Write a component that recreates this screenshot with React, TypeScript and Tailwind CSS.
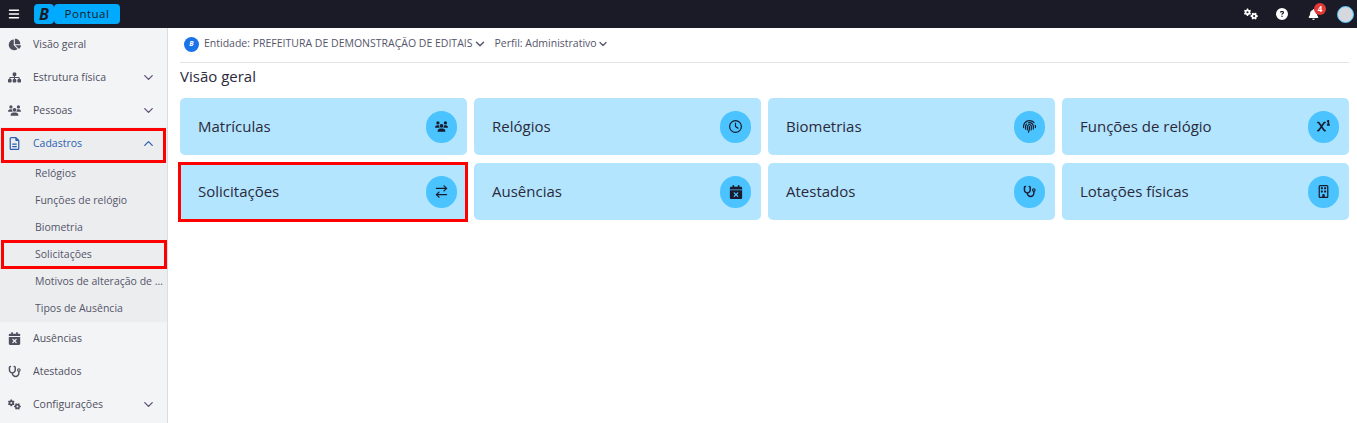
import type { ReactNode } from "react";
import { ArrowRightLeft, ChevronDown, ChevronUp } from "lucide-react";
import {
  FaBars,
  FaBell,
  FaCalendarXmark,
  FaChartPie,
  FaCircleQuestion,
  FaFingerprint,
  FaGears,
  FaRegBuilding,
  FaRegClock,
  FaRegFileLines,
  FaSitemap,
  FaStethoscope,
  FaSuperscript,
  FaUsers,
} from "react-icons/fa6";

const NavItem = ({
  icon,
  label,
  chevron,
  active,
}: {
  icon: ReactNode;
  label: string;
  chevron?: "up" | "down";
  active?: boolean;
}) => {
  return (
    <div
      className={`flex h-[33px] items-center pl-[8px] pr-[11px] text-[10.5px] ${
        active ? "text-[#2b5fb0]" : "text-[#4f4f5f]"
      }`}
    >
      <span className="flex w-[25px] shrink-0 items-center text-[13px]">{icon}</span>
      <span className="flex-1 truncate">{label}</span>
      {chevron === "down" && <ChevronDown size={15} className="text-[#5c4d78]" />}
      {chevron === "up" && <ChevronUp size={15} className="text-[#2b5fb0]" />}
    </div>
  );
};

const SubItem = ({ label, marked }: { label: string; marked?: boolean }) => {
  return (
    <div className="relative flex h-[27px] items-center pl-[35px] pr-[3px] text-[10.5px] text-[#55556a]">
      <span className="truncate">{label}</span>
      {marked && (
        <div className="absolute -bottom-[1px] -top-[1px] left-[1px] right-0 border-[3px] border-[#ff0000]" />
      )}
    </div>
  );
};

const Card = ({
  label,
  icon,
  marked,
}: {
  label: string;
  icon: ReactNode;
  marked?: boolean;
}) => {
  return (
    <div className="relative flex h-[57px] items-center justify-between rounded-[5px] bg-[#b3e5fe] pl-[18px] pr-[10px] text-[15px] text-[#2a2a3c]">
      <span>{label}</span>
      <span className="flex h-[32px] w-[31px] items-center justify-center rounded-full bg-[#4ac3ff] text-[13px] text-[#1a1b2e]">
        {icon}
      </span>
      {marked && (
        <div className="absolute -bottom-[2px] -left-[2px] -right-[1px] -top-[1px] border-[3px] border-[#ff0000]" />
      )}
    </div>
  );
};

export default function App() {
  return (
    <div className="flex h-[423px] w-[1357px] flex-col overflow-hidden bg-white font-['Open_Sans',sans-serif]">
      {/* Top bar */}
      <header className="flex h-[28px] shrink-0 items-center bg-[#1a1b26] pl-[8px] pr-[3px] text-white">
        <FaBars className="text-[12px]" />
        <div className="ml-[14px] flex h-[20px] items-center">
          <span className="flex h-[20px] w-[20px] items-center justify-center rounded-[4px] bg-[#00aaff] text-[16px] font-bold italic text-[#1a1b26]">
            B
          </span>
          <span className="flex h-[20px] w-[66px] items-center justify-center rounded-[4px] bg-[#00aaff] text-[11.5px] tracking-[0.5px] text-[#1a1b26]">
            Pontual
          </span>
        </div>
        <div className="ml-auto flex items-center">
          <FaGears className="text-[14px]" />
          <FaCircleQuestion className="ml-[18px] text-[12px]" />
          <span className="relative ml-[20px]">
            <FaBell className="text-[11px]" />
            <span className="absolute -top-[6px] left-[6px] flex h-[12px] w-[12px] items-center justify-center rounded-full bg-[#e53935] text-[8px] font-bold">
              4
            </span>
          </span>
          <span className="ml-[18px] h-[17px] w-[17px] rounded-full border border-[#4ac3ff] bg-[#d5d8dc]" />
        </div>
      </header>

      <div className="flex min-h-0 flex-1">
        {/* Sidebar */}
        <aside className="w-[168px] shrink-0 border-r border-[#dcdde0] bg-[#f3f4f6]">
          <NavItem icon={<FaChartPie />} label="Visão geral" />
          <NavItem icon={<FaSitemap />} label="Estrutura física" chevron="down" />
          <NavItem icon={<FaUsers />} label="Pessoas" chevron="down" />
          <div className="bg-[#ebedef]">
            <div className="relative">
              <NavItem icon={<FaRegFileLines />} label="Cadastros" chevron="up" active />
              <div className="absolute -bottom-[3px] left-[1px] right-[1px] top-[1px] border-[3px] border-[#ff0000]" />
            </div>
            <SubItem label="Relógios" />
            <SubItem label="Funções de relógio" />
            <SubItem label="Biometria" />
            <SubItem label="Solicitações" marked />
            <SubItem label="Motivos de alteração de ponto" />
            <SubItem label="Tipos de Ausência" />
          </div>
          <NavItem icon={<FaCalendarXmark />} label="Ausências" />
          <NavItem icon={<FaStethoscope />} label="Atestados" />
          <NavItem icon={<FaGears />} label="Configurações" chevron="down" />
        </aside>

        {/* Main content */}
        <main className="min-w-0 flex-1 pl-[12px] pr-[8px]">
          <div className="flex h-[35px] items-center border-b border-[#e2e3e5] pb-[2px] pl-[4px] text-[10.5px] text-[#55556a]">
            <span className="mr-[5px] flex h-[15px] w-[15px] items-center justify-center rounded-full bg-[#1a73e8] text-[7px] font-bold italic text-white">
              B
            </span>
            <span>Entidade: PREFEITURA DE DEMONSTRAÇÃO DE EDITAIS</span>
            <ChevronDown size={14} strokeWidth={2.5} className="ml-[1px]" />
            <span className="ml-[7px]">Perfil: Administrativo</span>
            <ChevronDown size={12} strokeWidth={2.5} />
          </div>
          <h1 className="mt-[3px] text-[15px] leading-[20px] text-[#2a2a3c]">Visão geral</h1>
          <div className="mt-[12px] grid grid-cols-4 gap-x-[7px] gap-y-[8px]">
            <Card label="Matrículas" icon={<FaUsers />} />
            <Card label="Relógios" icon={<FaRegClock />} />
            <Card label="Biometrias" icon={<FaFingerprint />} />
            <Card label="Funções de relógio" icon={<FaSuperscript />} />
            <Card label="Solicitações" icon={<ArrowRightLeft size={15} strokeWidth={2.2} />} marked />
            <Card label="Ausências" icon={<FaCalendarXmark className="text-[14px]" />} />
            <Card label="Atestados" icon={<FaStethoscope />} />
            <Card label="Lotações físicas" icon={<FaRegBuilding />} />
          </div>
        </main>
      </div>
    </div>
  );
}
